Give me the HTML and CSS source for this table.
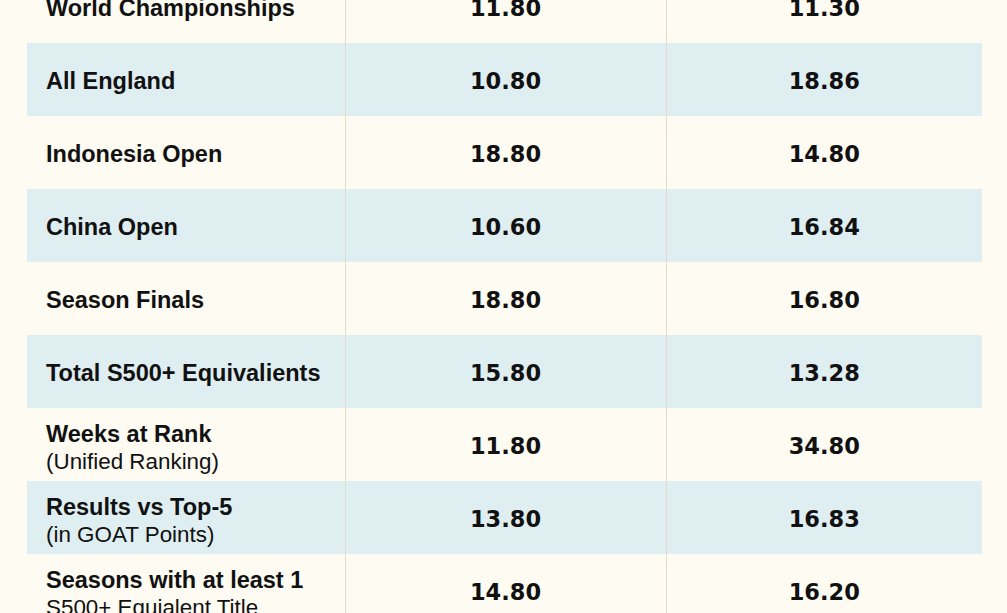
FILE: index.html
```
<!DOCTYPE html>
<html lang="en">
<head>
<meta charset="utf-8">
<title>Comparison</title>
<link rel="stylesheet" href="styles.css">
</head>
<body>
<div class="wrap">
  <table class="cmp">
    <colgroup>
      <col class="c-label">
      <col class="c-a">
      <col class="c-b">
    </colgroup>
    <tbody>
      <tr><td class="label">World Championships</td><td class="num">11.80</td><td class="num">11.30</td></tr>
      <tr class="alt"><td class="label">All England</td><td class="num">10.80</td><td class="num">18.86</td></tr>
      <tr><td class="label">Indonesia Open</td><td class="num">18.80</td><td class="num">14.80</td></tr>
      <tr class="alt"><td class="label">China Open</td><td class="num">10.60</td><td class="num">16.84</td></tr>
      <tr><td class="label">Season Finals</td><td class="num">18.80</td><td class="num">16.80</td></tr>
      <tr class="alt"><td class="label">Total S500+ Equivalients</td><td class="num">15.80</td><td class="num">13.28</td></tr>
      <tr><td class="label two"><span class="main">Weeks at Rank</span><span class="sub">(Unified Ranking)</span></td><td class="num">11.80</td><td class="num">34.80</td></tr>
      <tr class="alt"><td class="label two"><span class="main">Results vs Top-5</span><span class="sub">(in GOAT Points)</span></td><td class="num">13.80</td><td class="num">16.83</td></tr>
      <tr><td class="label two"><span class="main">Seasons with at least 1</span><span class="sub">S500+ Equialent Title</span></td><td class="num">14.80</td><td class="num">16.20</td></tr>
    </tbody>
  </table>
</div>
</body>
</html>
```
FILE: styles.css
```
html, body {
  margin: 0;
  padding: 0;
  background: #fdfbf2;
  overflow: hidden;
}
body {
  width: 1007px;
  height: 613px;
  font-family: "Liberation Sans", Arial, sans-serif;
  color: #111111;
}
.wrap {
  padding-left: 27px;
}
.cmp {
  margin-top: -30px;
  width: 955px;
  border-collapse: collapse;
  table-layout: fixed;
}
.c-label { width: 318px; }
.c-a { width: 321px; }
.c-b { width: 316px; }
.cmp tr {
  height: 73px;
}
.cmp tr.alt {
  background: #dfeef1;
}
.cmp td {
  padding: 0;
  vertical-align: middle;
}
.cmp td + td {
  border-left: 1px solid #e3dccd;
}
.label {
  padding: 2px 0 0 19px !important;
  font-weight: bold;
  font-size: 23.5px;
  line-height: 28px;
  white-space: nowrap;
}
.label.two {
  padding-top: 6px !important;
}
.label .main,
.label .sub {
  display: block;
}
.label .sub {
  font-weight: normal;
  font-size: 22.4px;
}
.num {
  text-align: center;
  font-family: "DejaVu Sans", sans-serif;
  font-weight: bold;
  font-size: 22.5px;
  padding-top: 3px !important;
}
```
